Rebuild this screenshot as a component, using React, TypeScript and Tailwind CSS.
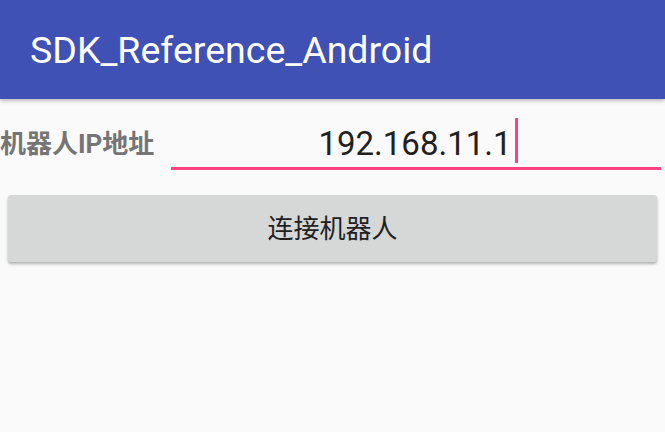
export default function App() {
  return (
    <div className="w-[665px] h-[432px] bg-[#fafafa] overflow-hidden" style={{ fontFamily: 'Roboto, "Noto Sans CJK SC", sans-serif' }}>
      <div className="h-[99px] bg-[#3f51b5] flex items-start pl-[30px] pt-[32px] shadow-[0_2px_4px_rgba(0,0,0,0.25)] relative z-10">
        <span className="text-white text-[37.5px] leading-none">SDK_Reference_Android</span>
      </div>
      <div className="flex items-start h-[71px]">
        <div className="w-[171px] mt-[32px] text-[#757575] text-[26px] font-bold leading-none whitespace-nowrap">机器人IP地址</div>
        <div className="flex-1 mr-[4px] h-[71px] flex items-end justify-center border-b-[3px] border-[#ff4081]">
          <span className="text-[#212121] text-[33px] leading-none mb-[7px] ml-[4px]">192.168.11.1</span>
          <span className="inline-block w-[3px] h-[45px] bg-[#ff4081] ml-[3px] mb-[4px]"></span>
        </div>
      </div>
      <div className="px-[8px] pt-[25px]">
        <div className="h-[67px] bg-[#d6d7d7] rounded-[3px] shadow-[0_2px_3px_rgba(0,0,0,0.3)] flex items-center justify-center">
          <span className="text-[#212121] text-[26px] leading-none">连接机器人</span>
        </div>
      </div>
    </div>
  );
}
